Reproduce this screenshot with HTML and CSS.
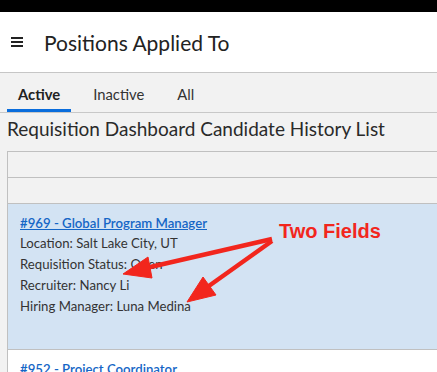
FILE: index.html
```html
<!DOCTYPE html>
<html lang="en">

<head>
    <meta charset="UTF-8">
    <meta name="viewport" content="width=device-width, initial-scale=1.0">
    <title>Positions Applied To</title>
    <link rel="stylesheet" href="styles.css">
</head>

<body>
    <div class="statusbar"></div>
    <header class="appbar">
        <span class="menu"><i></i><i></i><i></i></span>
        <h1>Positions Applied To</h1>
    </header>
    <nav class="tabs">
        <a class="tab active">Active</a>
        <a class="tab">Inactive</a>
        <a class="tab">All</a>
    </nav>
    <h2 class="list-title">Requisition Dashboard Candidate History List</h2>
    <ul class="list">
        <li class="row empty"></li>
        <li class="row empty"></li>
        <li class="row card selected">
            <a class="req-link">#969 - Global Program Manager</a>
            <p>Location: Salt Lake City, UT</p>
            <p>Requisition Status: Open</p>
            <p>Recruiter: Nancy Li</p>
            <p>Hiring Manager: Luna Medina</p>
        </li>
        <li class="row card">
            <a class="req-link">#952 - Project Coordinator</a>
        </li>
    </ul>

    <!-- annotation drawn on top of the screenshot -->
    <div class="note">
        <span class="note-text">Two Fields</span>
        <svg width="437" height="372" viewBox="0 0 437 372">
            <g fill="#f2261d" stroke="#f2261d">
                <line x1="272" y1="239" x2="146" y2="268" stroke-width="4.5" />
                <polygon points="123,274 148,257 152,278" stroke-width="1" />
                <line x1="272" y1="241" x2="206" y2="288" stroke-width="4.5" />
                <polygon points="187,302 203,277 216,295" stroke-width="1" />
            </g>
        </svg>
    </div>
</body>

</html>
```

FILE: styles.css
```css
body {
    margin: 0;
    font-family: Lato, 'Noto Sans', sans-serif;
    background: #f2f2f2;
    color: #333;
    height: 372px;
    overflow: hidden;
    position: relative;
}

.statusbar {
    height: 12px;
    background: #000;
}

.appbar {
    height: 60px;
    background: #fff;
    border-bottom: 1px solid #c6c6c6;
    display: flex;
    align-items: center;
    padding-left: 11px;

    h1 {
        margin: 0 0 0 21px;
        font-size: 21px;
        font-weight: 400;
        color: #222;
    }
}

.menu {
    display: flex;
    flex-direction: column;
    gap: 2.5px;
    width: 12px;

    i {
        height: 1.5px;
        background: #222;
    }
}

.tabs {
    height: 39px;
    display: flex;
    padding-left: 7px;
    border-bottom: 1px solid #c8c8c8;

    .tab {
        display: flex;
        align-items: center;
        padding: 5px 11px 0;
        margin-right: 11px;
        font-size: 14.8px;
        color: #333;
        border-bottom: 3px solid transparent;
        height: 31px;

        &.active {
            font-weight: 700;
            color: #222;
            border-bottom-color: #0a6ddc;
        }
    }
}

.list-title {
    margin: 4px 0 0 7px;
    font-size: 19px;
    font-weight: 400;
    color: #2a2a2a;
    height: 34px;
}

.list {
    list-style: none;
    margin: 0 0 0 7px;
    padding: 0;
    border-top: 1px solid #c0c0c0;
    border-left: 1px solid #c0c0c0;

    .row {
        border-bottom: 1px solid #c0c0c0;
    }

    .empty {
        height: 25px;
    }

    .card {
        padding: 10px 12px 0;
        background: #fff;
        height: 135px;

        &.selected {
            background: #d3e3f3;
        }

        p {
            margin: 0;
            font-size: 13.2px;
            line-height: 21px;
        }
    }
}

.req-link {
    display: block;
    font-size: 13.2px;
    font-weight: 600;
    color: #1566c6;
    text-decoration: underline;
    line-height: 19px;
}

.note {
    position: absolute;
    inset: 0;
    pointer-events: none;

    svg {
        position: absolute;
        top: 0;
        left: 0;
    }
}

.note-text {
    position: absolute;
    left: 279px;
    top: 220px;
    font-family: 'Liberation Sans', Arial, sans-serif;
    font-weight: 700;
    font-size: 20px;
    color: #f2261d;
}
```
